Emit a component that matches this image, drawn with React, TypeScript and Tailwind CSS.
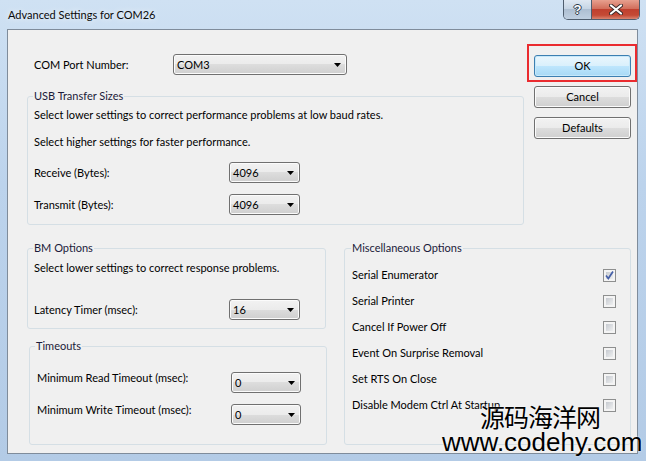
import React from 'react';

const btnBase =
  'h-[22px] w-full rounded-[3px] border flex items-center justify-center leading-[16px]';

const Arrow = () => (
  <svg width="7" height="4" viewBox="0 0 7 4" className="shrink-0">
    <polygon points="0,0 7,0 3.5,4" fill="#000" />
  </svg>
);

const Combo = ({ value, w }: { value: string; w: string }) => (
  <div
    className={`${w} h-[21px] shrink-0 rounded-[3px] border border-[#707070] bg-[linear-gradient(#f2f2f2,#ebebeb_50%,#dddddd_50%,#cfcfcf)] shadow-[inset_0_0_0_1px_#fbfbfb] flex items-center justify-between pl-[3px] pr-[5px]`}
  >
    <span className="leading-[16px]">{value}</span>
    <Arrow />
  </div>
);

const Check = ({ checked }: { checked?: boolean }) => (
  <div className="relative w-[13px] h-[13px] shrink-0 border border-[#8e8f8f] bg-[#f4f4f4] p-[2px]">
    <div className="w-full h-full bg-[linear-gradient(135deg,#c6cad0,#eeeff0)]" />
    {checked && (
      <svg width="13" height="13" viewBox="0 0 13 13" className="absolute -left-px -top-px">
        <path d="M3 6.5 L5.3 9.5 L10 2.5" stroke="#4660a8" strokeWidth="1.7" fill="none" />
      </svg>
    )}
  </div>
);

const miscOptions = [
  { label: 'Serial Enumerator', checked: true },
  { label: 'Serial Printer' },
  { label: 'Cancel If Power Off' },
  { label: 'Event On Surprise Removal' },
  { label: 'Set RTS On Close' },
  { label: 'Disable Modem Ctrl At Startup' },
];

const legendCls = 'ml-[5px] px-[1px] leading-[16px] text-[#1b1b3a]';
const groupCls = 'rounded-[3px] border border-[#d5dfe5]';

export default function App() {
  return (
    <div className="relative w-[646px] h-[461px] overflow-hidden bg-[linear-gradient(180deg,#cfe1f3,#bcd3ec_40%,#b3cbe6)] font-['Lato','Liberation_Sans',sans-serif] text-[11px] text-black">
      {/* title bar */}
      <div className="h-[29px] flex items-start">
        <div className="flex-1 pl-[8px] pt-[7px] leading-[16px] text-[#0a0a0a] [text-shadow:0_0_6px_#fff]">
          Advanced Settings for COM26
        </div>
        <div className="mr-[6px] flex h-[20px] rounded-b-[5px] border border-t-0 border-[#4f5d6e] overflow-hidden">
          <div className="w-[28px] flex items-center justify-center bg-[linear-gradient(#dfe8f2,#c4d3e3_50%,#aebfd2_50%,#bfcfe0)] border-r border-[#4f5d6e] text-white font-bold text-[13px] leading-none font-['Liberation_Sans',sans-serif] [text-shadow:1px_0_#2b3a4a,-1px_0_#2b3a4a,0_1px_#2b3a4a,0_-1px_#2b3a4a]">
            ?
          </div>
          <div className="w-[47px] flex items-center justify-center bg-[linear-gradient(#e7a08f,#d26f5c_45%,#c0402f_50%,#c44a35_80%,#d98470)]">
            <svg width="14" height="11" viewBox="0 0 14 11">
              <path d="M2 1.5 L12 9.5 M12 1.5 L2 9.5" stroke="#3a2a2a" strokeWidth="4" strokeLinecap="round" />
              <path d="M2 1.5 L12 9.5 M12 1.5 L2 9.5" stroke="#fff" strokeWidth="2.2" strokeLinecap="round" />
            </svg>
          </div>
        </div>
      </div>

      {/* client area */}
      <div className="ml-[7px] w-[631px] h-[425px] border border-[#7f8c9b] bg-[#f0f0f0]">
        {/* top section */}
        <div className="flex items-start">
          <div className="ml-[19px] w-[497px] flex flex-col">
            <div className="mt-[24px] h-[21px] flex items-center">
              <span className="w-[146px] pl-[7px] leading-[16px]">COM Port Number:</span>
              <Combo value="COM3" w="w-[174px]" />
            </div>
            <fieldset className={`mt-[13px] ${groupCls}`}>
              <legend className={legendCls}>USB Transfer Sizes</legend>
              <div className="pl-[6px] pt-[3px] pb-[9px] flex flex-col">
                <div className="leading-[16px]">
                  Select lower settings to correct performance problems at low baud rates.
                </div>
                <div className="mt-[11px] leading-[16px]">Select higher settings for faster performance.</div>
                <div className="mt-[12px] h-[21px] flex items-center">
                  <span className="w-[195px] leading-[16px]">Receive (Bytes):</span>
                  <Combo value="4096" w="w-[71px]" />
                </div>
                <div className="mt-[11px] h-[21px] flex items-center">
                  <span className="w-[195px] leading-[16px]">Transmit (Bytes):</span>
                  <Combo value="4096" w="w-[71px]" />
                </div>
              </div>
            </fieldset>
          </div>

          <div className="ml-[10px] w-[97px] flex flex-col gap-[9px]">
            <div className="relative mt-[25px]">
              <div
                className={`${btnBase} border-[#3c7fb1] bg-[linear-gradient(#eaf6fd,#d9f0fc_50%,#bee6fd_50%,#a7d9f5)] shadow-[inset_0_0_0_1px_#c6e8fa]`}
              >
                OK
              </div>
              <div className="absolute -left-[7px] -top-[11px] w-[110px] h-[38px] border-2 border-[#ea2b2f]" />
            </div>
            <div
              className={`${btnBase} border-[#707070] bg-[linear-gradient(#f2f2f2,#ebebeb_50%,#dddddd_50%,#cfcfcf)] shadow-[inset_0_0_0_1px_#fbfbfb]`}
            >
              Cancel
            </div>
            <div
              className={`${btnBase} border-[#707070] bg-[linear-gradient(#f2f2f2,#ebebeb_50%,#dddddd_50%,#cfcfcf)] shadow-[inset_0_0_0_1px_#fbfbfb]`}
            >
              Defaults
            </div>
          </div>
        </div>

        {/* bottom section */}
        <div className="mt-[15px] flex items-start">
          <div className="ml-[19px] w-[300px] flex flex-col">
            <fieldset className={`w-[299px] ${groupCls}`}>
              <legend className={legendCls}>BM Options</legend>
              <div className="pl-[6px] pt-[4px] pb-[8px] flex flex-col">
                <div className="leading-[16px]">Select lower settings to correct response problems.</div>
                <div className="mt-[23px] h-[21px] flex items-center">
                  <span className="w-[195px] leading-[16px]">Latency Timer (msec):</span>
                  <Combo value="16" w="w-[71px]" />
                </div>
              </div>
            </fieldset>
            <fieldset className={`ml-[2px] mt-[9px] w-[298px] ${groupCls}`}>
              <legend className={legendCls}>Timeouts</legend>
              <div className="pl-[7px] pt-[16px] pb-[19px] flex flex-col">
                <div className="flex items-start">
                  <span className="w-[194px] leading-[16px]">Minimum Read Timeout (msec):</span>
                  <div className="mt-[2px]">
                    <Combo value="0" w="w-[70px]" />
                  </div>
                </div>
                <div className="mt-[9px] flex items-start">
                  <span className="w-[194px] leading-[16px]">Minimum Write Timeout (msec):</span>
                  <div className="mt-[2px]">
                    <Combo value="0" w="w-[70px]" />
                  </div>
                </div>
              </div>
            </fieldset>
          </div>

          <fieldset className={`ml-[17px] w-[287px] ${groupCls}`}>
            <legend className="ml-[6px] px-[1px] leading-[16px] text-[#1b1b3a]">Miscellaneous Options</legend>
            <div className="mt-[6px] pl-[7px] pr-[14px] pb-[26px] flex flex-col">
              {miscOptions.map((o) => (
                <div key={o.label} className="h-[26px] flex items-center justify-between">
                  <span className="leading-[16px] whitespace-nowrap">{o.label}</span>
                  <Check checked={o.checked} />
                </div>
              ))}
            </div>
          </fieldset>
        </div>
      </div>

      {/* watermark */}
      <div className="absolute left-[480px] top-[404px] text-[25px] leading-none font-['Noto_Sans_CJK_SC',sans-serif] tracking-[-1px] text-black [text-shadow:0_0_2px_#fff]">
        源码海洋网
      </div>
      <div className="absolute left-[442px] top-[426px] text-[26px] leading-[32px] font-['Liberation_Sans',sans-serif] text-black [text-shadow:0_0_2px_#fff]">
        www.codehy.com
      </div>
    </div>
  );
}
